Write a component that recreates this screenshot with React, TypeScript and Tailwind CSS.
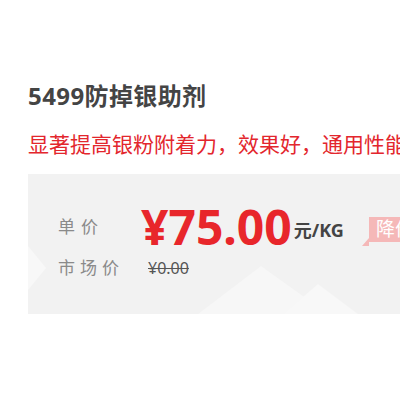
import React from "react";

const ff = { fontFamily: '"Noto Sans", "Noto Sans CJK SC", sans-serif' };

export default function App() {
  return (
    <div
      className="w-[400px] h-[400px] bg-white overflow-hidden pt-[80px] pl-[28px]"
      style={ff}
    >
      <div className="text-[24px] leading-[32px] font-bold text-[#444444] tracking-[0.4px] whitespace-nowrap">
        5499防掉银助剂
      </div>
      <div className="mt-[18px] text-[21px] leading-[28px] text-[#e3262d] whitespace-nowrap">
        显著提高银粉附着力，效果好，通用性能优异
      </div>
      <div className="relative mt-[16px] h-[140px] w-[400px] bg-[#f2f2f2] overflow-hidden">
        <svg
          className="absolute inset-0"
          width="400"
          height="140"
          viewBox="0 0 400 140"
        >
          <polygon points="0,72 18,94 0,116" fill="#f8f8f8" />
          <polygon points="170,140 233,92 300,140" fill="#f7f7f7" />
          <polygon points="255,140 290,110 330,140" fill="#f8f8f8" />
        </svg>
        <div className="relative pl-[30px] pt-[30px]">
          <div className="flex items-center h-[46px]">
            <div className="w-[83px] text-[17px] tracking-[6px] text-[#8a8a8a] whitespace-nowrap">
              单价
            </div>
            <div className="text-[48px] leading-[46px] font-bold text-[#e8262b] whitespace-nowrap">
              ¥75.00
            </div>
            <div className="mt-[6px] ml-[2px] text-[18px] font-bold text-[#444444] whitespace-nowrap">
              元/KG
            </div>
            <div className="relative ml-[25px] mt-[4px] h-[25px] px-[7px] bg-[#f5b8b8] text-white text-[19px] leading-[25px] whitespace-nowrap">
              降价
              <div className="absolute left-[-7px] bottom-[-4px] w-0 h-0 border-t-[8px] border-t-transparent border-r-[7px] border-r-[#f5b8b8]" />
            </div>
          </div>
          <div className="flex items-center h-[24px] mt-[6px]">
            <div className="w-[90px] text-[17px] tracking-[5px] text-[#8a8a8a] whitespace-nowrap">
              市场价
            </div>
            <div className="text-[16px] text-[#555555] line-through whitespace-nowrap">
              ¥0.00
            </div>
          </div>
        </div>
      </div>
    </div>
  );
}
